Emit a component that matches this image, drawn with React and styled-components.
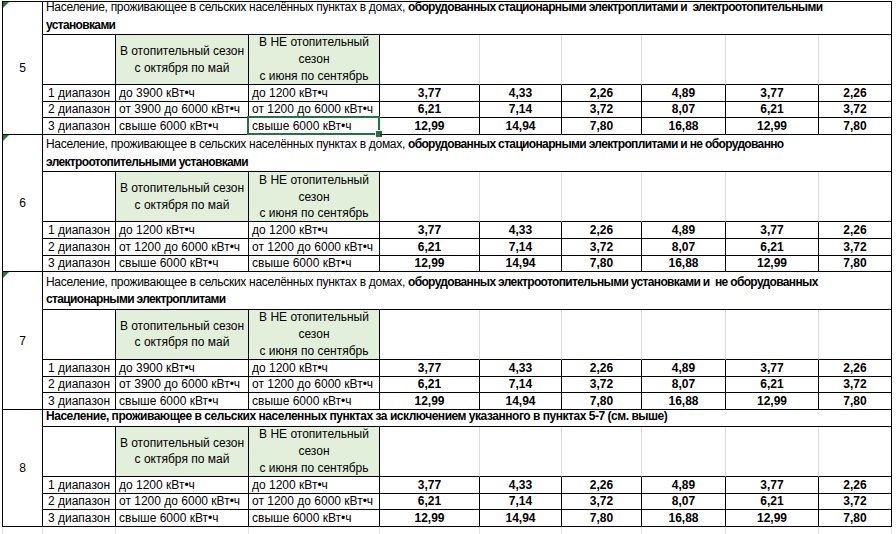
import React from "react";
import styled, { createGlobalStyle } from "styled-components";

const GlobalStyle = createGlobalStyle`
  html, body {
    margin: 0;
    padding: 0;
    background: #fff;
    overflow: hidden;
  }
  body {
    font-family: "Liberation Sans", Arial, sans-serif;
    font-size: 12px;
    color: #000;
  }
`;

const COLUMNS = "40px 73px 133px 131px 100px 82px 80px 84px 93px 73px";
const ROW = 16.67;

const PRICES = [
  ["3,77", "4,33", "2,26", "4,89", "3,77", "2,26"],
  ["6,21", "7,14", "3,72", "8,07", "6,21", "3,72"],
  ["12,99", "14,94", "7,80", "16,88", "12,99", "7,80"],
];

const HEAT_3900 = ["до 3900 кВт•ч", "от 3900 до 6000 кВт•ч", "свыше 6000 кВт•ч"];
const HEAT_1200 = ["до 1200 кВт•ч", "от 1200 до 6000 кВт•ч", "свыше 6000 кВт•ч"];
const SUMMER = ["до 1200 кВт•ч", "от 1200 до 6000 кВт•ч", "свыше 6000 кВт•ч"];

const LEAD = "Население, проживающее в сельских населённых пунктах в домах, ";

const sections = [
  {
    num: 5,
    titleHeight: 33,
    marker: true,
    selected: true,
    title: (
      <>
        {LEAD}
        <b>оборудованных стационарными электроплитами и{"\u00a0"} электроотопительными</b>
        <br />
        <b>установками</b>
      </>
    ),
    heat: HEAT_3900,
  },
  {
    num: 6,
    titleHeight: 37.5,
    marker: true,
    title: (
      <>
        {LEAD}
        <b>оборудованных стационарными электроплитами и не оборудованно</b>
        <br />
        <b>электроотопительными установками</b>
      </>
    ),
    heat: HEAT_1200,
  },
  {
    num: 7,
    titleHeight: 37.5,
    marker: true,
    title: (
      <>
        {LEAD}
        <b>оборудованных электроотопительными установками и{"\u00a0"} не оборудованных</b>
        <br />
        <b>стационарными электроплитами</b>
      </>
    ),
    heat: HEAT_3900,
  },
  {
    num: 8,
    titleHeight: 17,
    loose: true,
    title: (
      <b>
        Население, проживающее в сельских населенных пунктах за исключением указанного в
        пунктах 5-7 (см. выше)
      </b>
    ),
    heat: HEAT_1200,
  },
];

export default function App() {
  return (
    <>
      <GlobalStyle />
      <Sheet>
        <Table>
          {sections.map((s) => (
            <Section key={s.num} $titleHeight={s.titleHeight}>
              <NumberCell>
                {s.marker && <Marker />}
                {s.num}
              </NumberCell>
              <TitleCell $loose={s.loose}>
                <span>{s.title}</span>
              </TitleCell>

              <Cell />
              <SeasonCell>
                В отопительный сезон
                <br />с октября по май
              </SeasonCell>
              <SeasonCell>
                В НЕ отопительный
                <br />
                сезон
                <br />с июня по сентябрь
              </SeasonCell>
              {PRICES[0].map((_, i) => (
                <BlankCell key={i} $last={i === PRICES[0].length - 1} />
              ))}

              {PRICES.map((row, r) => (
                <React.Fragment key={r}>
                  <RangeCell>{r + 1} диапазон</RangeCell>
                  <TextCell>{s.heat[r]}</TextCell>
                  <TextCell>
                    {SUMMER[r]}
                    {s.selected && r === 2 && (
                      <Selection>
                        <Handle />
                      </Selection>
                    )}
                  </TextCell>
                  {row.map((v, i) => (
                    <PriceCell key={i}>{v}</PriceCell>
                  ))}
                </React.Fragment>
              ))}
            </Section>
          ))}
        </Table>
        <Spill>
          {Array.from({ length: 10 }).map((_, i) => (
            <GridCell key={i} />
          ))}
        </Spill>
      </Sheet>
    </>
  );
}

// Styled Components
const Sheet = styled.div`
  width: 896px;
  height: 534px;
  overflow: hidden;
  padding: 1px 0 0 3px;
  box-sizing: border-box;
  background: linear-gradient(to right, transparent 2px, #e1e1e1 2px, #e1e1e1 3px, transparent 3px);
`;

const Table = styled.div`
  display: flex;
  flex-direction: column;
  width: 889px;
  border-top: 1px solid #000;
  border-left: 1px solid #000;
  box-sizing: content-box;
  margin-left: -1px;
  background: #fff;
`;

const Section = styled.div`
  display: grid;
  grid-template-columns: ${COLUMNS};
  grid-template-rows: ${(p) => p.$titleHeight}px 50px repeat(3, ${ROW}px);
`;

const Cell = styled.div`
  position: relative;
  box-sizing: border-box;
  border-right: 1px solid #000;
  border-bottom: 1px solid #000;
  white-space: nowrap;
  overflow: visible;
  line-height: 16px;
`;

const NumberCell = styled(Cell)`
  grid-row: 1 / span 5;
  display: flex;
  align-items: center;
  justify-content: center;
  font-size: 12px;
`;

const Marker = styled.span`
  position: absolute;
  top: 0;
  left: 0;
  width: 0;
  height: 0;
  border-top: 6px solid #1e7b3c;
  border-right: 6px solid transparent;
`;

const TitleCell = styled(Cell)`
  grid-column: 2 / -1;
  display: flex;
  align-items: flex-end;
  padding: 0 0 0 3px;
  line-height: 17.5px;
  letter-spacing: -0.3px;

  b {
    font-weight: bold;
    letter-spacing: ${(p) => (p.$loose ? "-0.47px" : "-0.65px")};
  }
`;

const SeasonCell = styled(Cell)`
  background: #e2efda;
  display: flex;
  align-items: center;
  justify-content: center;
  text-align: center;
  line-height: 16.7px;
`;

const BlankCell = styled(Cell)`
  border-right-color: ${(p) => (p.$last ? "#000" : "#dcdcdc")};
`;

const RangeCell = styled(Cell)`
  display: flex;
  align-items: flex-end;
  justify-content: center;
`;

const TextCell = styled(Cell)`
  display: flex;
  align-items: flex-end;
  padding-left: 3px;
`;

const PriceCell = styled(Cell)`
  display: flex;
  align-items: flex-end;
  justify-content: center;
  font-weight: bold;
`;

const Selection = styled.div`
  position: absolute;
  top: -2px;
  left: -2px;
  right: -1px;
  bottom: -1px;
  border: 2px solid #217346;
  pointer-events: none;
`;

const Handle = styled.div`
  position: absolute;
  right: -5px;
  bottom: -5px;
  width: 6px;
  height: 6px;
  background: #217346;
  border: 1px solid #fff;
`;

const Spill = styled.div`
  display: grid;
  grid-template-columns: ${COLUMNS};
  height: 20px;
`;

const GridCell = styled.div`
  border-right: 1px solid #e1e1e1;
`;
